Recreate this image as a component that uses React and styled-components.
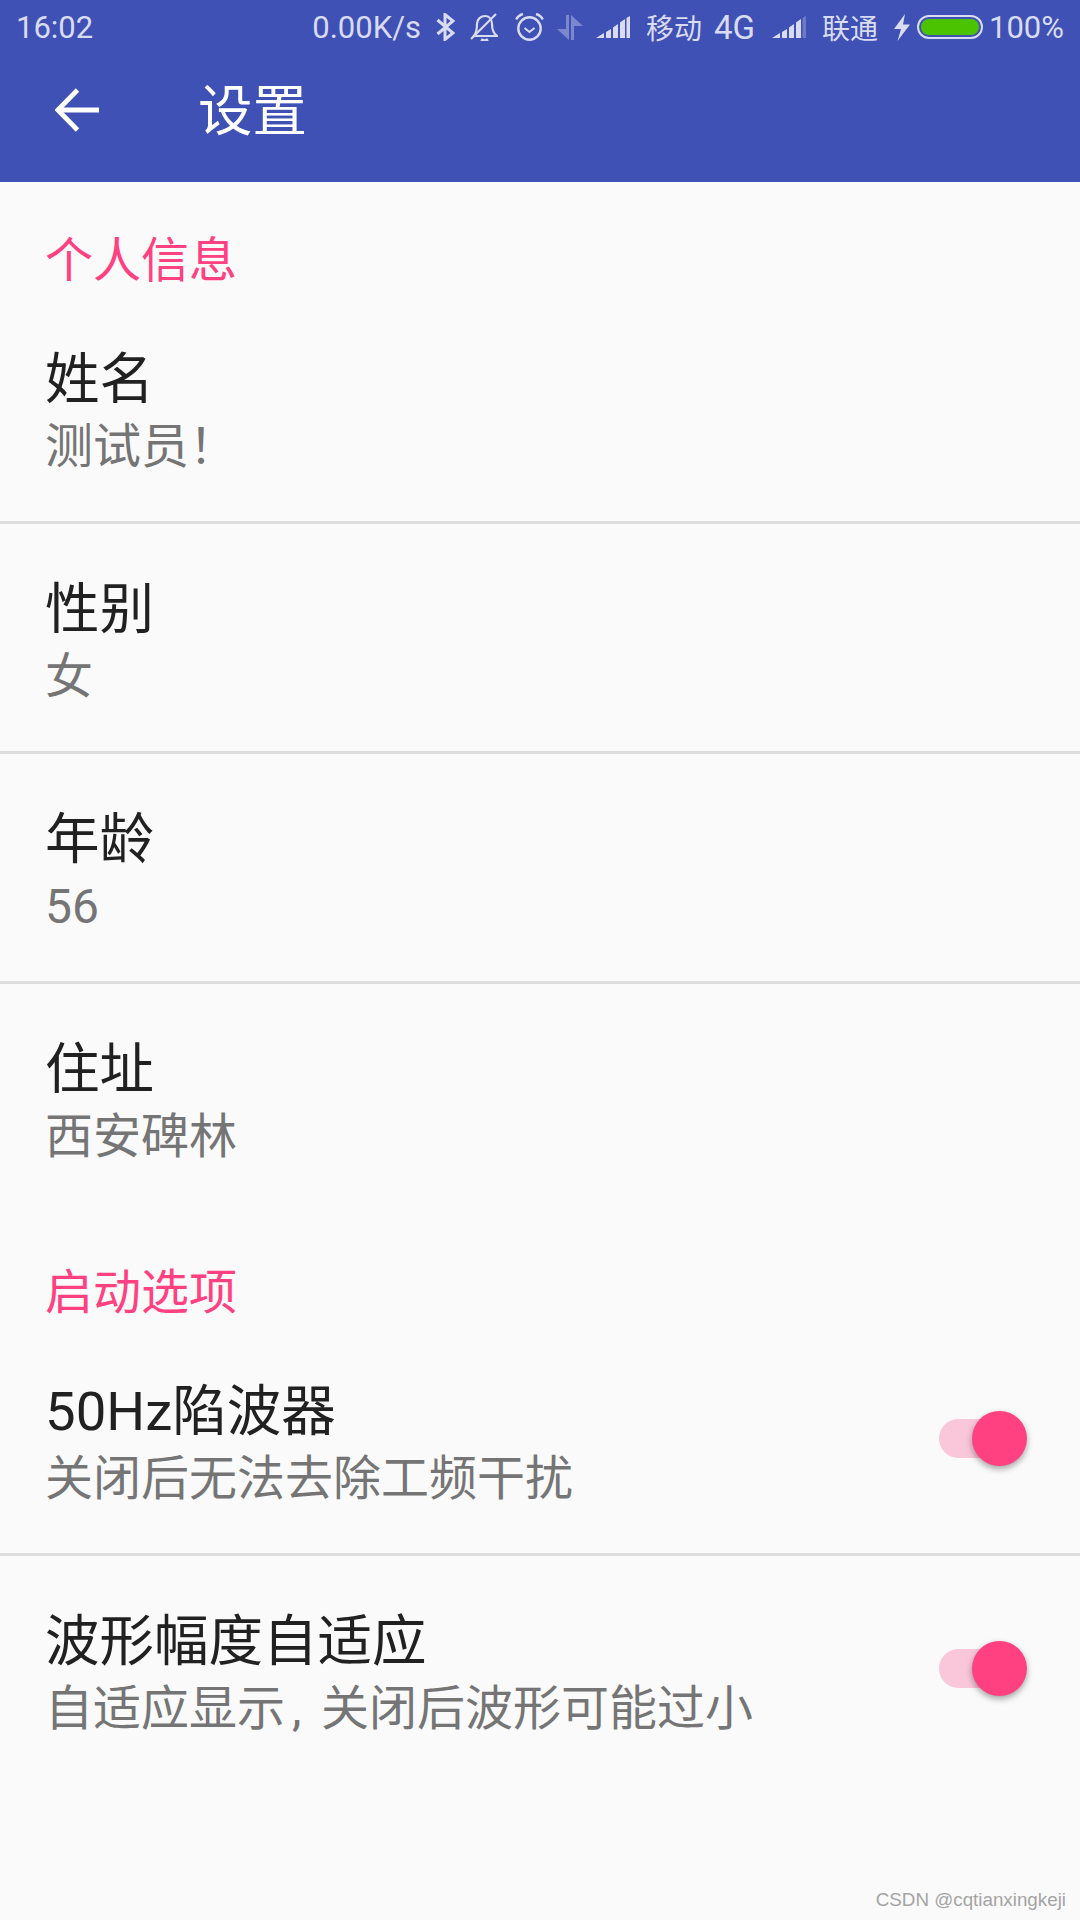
import styled, { createGlobalStyle } from "styled-components";

const GlobalStyle = createGlobalStyle`
  html, body {
    margin: 0;
    padding: 0;
    background: #fafafa;
  }
  * {
    box-sizing: border-box;
  }
`;

const font = `Roboto, "Noto Sans CJK SC", sans-serif`;

const Signal = ({ faded }) => (
  <svg width="34" height="22" viewBox="0 0 34 22">
    <g fill="#d9dcf1">
      <path d="M0 22 L8 17 V22Z" />
      <path d="M10 16 L15 13 V22 H10Z" />
      <path d="M17 11.5 L22 8 V22 H17Z" />
      <path d="M24 6.5 L29 3 V22 H24Z" />
      <path d="M30.5 2 L34 0 V22 H30.5Z" opacity={faded ? 0.3 : 1} />
    </g>
  </svg>
);

const Bluetooth = () => (
  <svg width="19" height="28" viewBox="0 0 19 28" fill="none" stroke="#d9dcf1" strokeWidth="3">
    <path d="M1.5 7 L17 20 L9 26.5 V1.5 L17 8 L1.5 21" />
  </svg>
);

const BellOff = () => (
  <svg width="28" height="28" viewBox="0 0 28 28" fill="none" stroke="#d9dcf1" strokeWidth="2.2">
    <path d="M4 23 C7 19 7 15 7 11 C7 6 11 3 15 3 C19 3 22 6 22 11 C22 16 23 20 27 23 Z" />
    <path d="M1 26 L26 1" />
    <path d="M11 26.5 Q14.5 28.5 18 26.5" strokeWidth="2.6" />
  </svg>
);

const Alarm = () => (
  <svg width="29" height="28" viewBox="0 0 29 28" fill="none" stroke="#d9dcf1" strokeWidth="2.4">
    <circle cx="14.5" cy="15.5" r="11.2" />
    <path d="M9.5 15 L14.5 19 L19.5 15" strokeWidth="2" />
    <path d="M1.2 6.5 Q3.5 2 8 1 M27.8 6.5 Q25.5 2 21 1" />
  </svg>
);

const DataArrows = () => (
  <svg width="26" height="25" viewBox="0 0 26 25" fill="#d9dcf1" opacity="0.4">
    <path d="M9 0 H12 V25 L0 14 H9 Z" />
    <path d="M14 0 L26 11 H17 V25 H14 Z" />
  </svg>
);

const Bolt = () => (
  <svg width="16" height="27" viewBox="0 0 16 27" fill="#d9dcf1">
    <path d="M11 0 L0 15 H7 L3.5 27 L16 10.5 H9 Z" />
  </svg>
);

const Back = () => (
  <svg width="44" height="44" viewBox="0 0 44 44" fill="none" stroke="#fff" strokeWidth="4.8">
    <path d="M44 22 H3" />
    <path d="M22.5 2 L2.8 22 L22.5 42" />
  </svg>
);

const Header = styled.header`
  height: 182px;
  background: #3f51b5;
  display: flex;
  flex-direction: column;
  font-family: ${font};
`;

const StatusBar = styled.div`
  height: 54px;
  padding: 0 16px;
  display: flex;
  align-items: center;
  color: #d9dcf1;
  font-size: 31px;
`;

const StatusRight = styled.div`
  margin-left: auto;
  display: flex;
  align-items: center;
`;

const StatusItem = styled.span`
  display: flex;
  align-items: center;
  margin-left: ${(p) => p.$left}px;
  font-size: ${(p) => p.$size || 31}px;
`;

const Battery = styled.div`
  width: 66px;
  height: 24px;
  border: 2px solid #d9dcf1;
  border-radius: 12px;
  padding: 2px;

  &::before {
    content: "";
    display: block;
    height: 100%;
    background: #4cc300;
    border-radius: 8px;
  }
`;

const Toolbar = styled.div`
  flex: 1;
  display: flex;
  align-items: center;
  padding: 0 0 16px 55px;
`;

const Title = styled.h1`
  margin: 0 0 7px 99px;
  font-size: 54.5px;
  font-weight: 400;
  color: #fff;
`;

const Section = styled.section`
  padding-top: 42px;
  font-family: ${font};
`;

const SectionLabel = styled.div`
  padding-left: 45px;
  height: 70px;
  line-height: 74px;
  font-size: 48px;
  color: #ff4081;
`;

const Row = styled.div`
  height: 230px;
  padding: 0 45px;
  display: flex;
  align-items: flex-start;
  justify-content: space-between;
  border-bottom: 3px solid ${(p) => (p.$last ? "transparent" : "#dddddd")};
`;

const RowText = styled.div`
  display: flex;
  flex-direction: column;
  padding-top: 46px;
`;

const RowTitle = styled.div`
  font-size: 54.5px;
  line-height: 78px;
  color: #212121;
`;

const RowSummary = styled.div`
  font-size: 48px;
  line-height: 58px;
  color: #757575;
`;

const Comma = styled.span`
  display: inline-block;
  width: 36px;
  padding-left: 7px;
`;

const Switch = styled.div`
  position: relative;
  width: 73px;
  height: 39px;
  margin: 93px 23px 0 0;
  border-radius: 20px;
  background: #f9c6da;
`;

const Thumb = styled.span`
  position: absolute;
  right: -15px;
  top: -8px;
  width: 55px;
  height: 55px;
  border-radius: 50%;
  background: #ff4081;
  box-shadow: 0 3px 6px rgba(0, 0, 0, 0.35);
`;

const Watermark = styled.div`
  position: absolute;
  right: 14px;
  top: 1889px;
  font: 18.8px "Liberation Sans", sans-serif;
  color: #a4a4a4;
`;

const Page = styled.div`
  position: relative;
  height: 1920px;
  overflow: hidden;
  background: #fafafa;
`;

const profile = [
  ["姓名", "测试员！"],
  ["性别", "女"],
  ["年龄", "56"],
  ["住址", "西安碑林"],
];

const options = [
  ["50Hz陷波器", "关闭后无法去除工频干扰"],
  [
    "波形幅度自适应",
    <>
      自适应显示<Comma>,</Comma>关闭后波形可能过小
    </>,
  ],
];

export default function App() {
  return (
    <Page>
      <GlobalStyle />
      <Header>
        <StatusBar>
          <span>16:02</span>
          <StatusRight>
            <StatusItem $left={0}>0.00K/s</StatusItem>
            <StatusItem $left={15}><Bluetooth /></StatusItem>
            <StatusItem $left={15}><BellOff /></StatusItem>
            <StatusItem $left={17}><Alarm /></StatusItem>
            <StatusItem $left={13}><DataArrows /></StatusItem>
            <StatusItem $left={13}><Signal /></StatusItem>
            <StatusItem $left={16} $size={28}>移动</StatusItem>
            <StatusItem $left={12} $size={33}>4G</StatusItem>
            <StatusItem $left={17}><Signal faded /></StatusItem>
            <StatusItem $left={16} $size={28}>联通</StatusItem>
            <StatusItem $left={16}><Bolt /></StatusItem>
            <StatusItem $left={7}><Battery /></StatusItem>
            <StatusItem $left={6}>100%</StatusItem>
          </StatusRight>
        </StatusBar>
        <Toolbar>
          <Back />
          <Title>设置</Title>
        </Toolbar>
      </Header>
      <Section>
        <SectionLabel>个人信息</SectionLabel>
        {profile.map(([title, summary], i) => (
          <Row key={title} $last={i === profile.length - 1}>
            <RowText>
              <RowTitle>{title}</RowTitle>
              <RowSummary>{summary}</RowSummary>
            </RowText>
          </Row>
        ))}
      </Section>
      <Section>
        <SectionLabel>启动选项</SectionLabel>
        {options.map(([title, summary], i) => (
          <Row key={title} $last={i === options.length - 1}>
            <RowText>
              <RowTitle>{title}</RowTitle>
              <RowSummary>{summary}</RowSummary>
            </RowText>
            <Switch>
              <Thumb />
            </Switch>
          </Row>
        ))}
      </Section>
      <Watermark>CSDN @cqtianxingkeji</Watermark>
    </Page>
  );
}
